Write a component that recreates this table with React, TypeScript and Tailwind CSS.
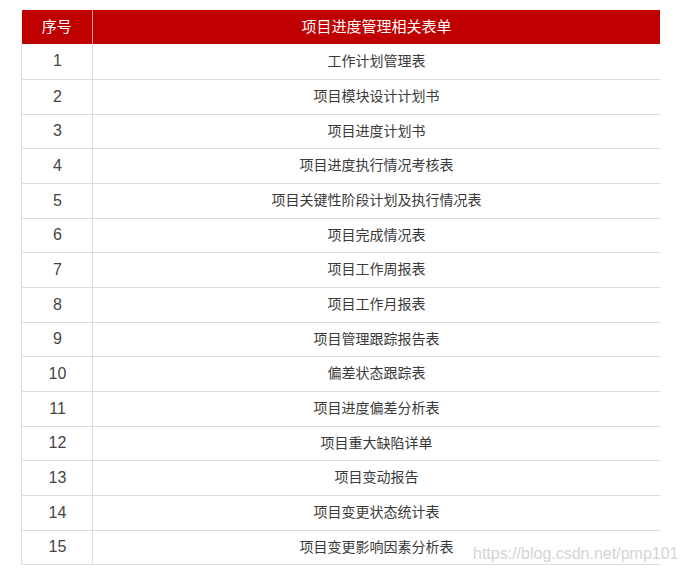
import React from 'react';

const rows: string[] = [
  '工作计划管理表',
  '项目模块设计计划书',
  '项目进度计划书',
  '项目进度执行情况考核表',
  '项目关键性阶段计划及执行情况表',
  '项目完成情况表',
  '项目工作周报表',
  '项目工作月报表',
  '项目管理跟踪报告表',
  '偏差状态跟踪表',
  '项目进度偏差分析表',
  '项目重大缺陷详单',
  '项目变动报告',
  '项目变更状态统计表',
  '项目变更影响因素分析表',
];

// row heights alternate so 15 rows fill 520px like the screenshot
const heightClass = ['h-[35px]', 'h-[35px]', 'h-[34px]'];

export default function App() {
  return (
    <div
      className="relative w-[683px] h-[573px] bg-white overflow-hidden"
      style={{ fontFamily: '"Liberation Sans", "Noto Sans CJK SC", sans-serif' }}
    >
      <div className="pt-[10px] pl-[21px]">
        <table className="w-[639px] border-collapse table-fixed">
          <thead>
            <tr className="h-[34px] bg-[#c00000] text-white text-[15px]">
              <th className="w-[71px] font-normal border-r border-[#e8a0a0]">序号</th>
              <th className="font-normal">项目进度管理相关表单</th>
            </tr>
          </thead>
          <tbody className="text-[#3a3a3a] text-[14px]">
            {rows.map((name, i) => (
              <tr key={i} className={`${heightClass[i % 3]} border-b border-[#dcdcdc]`}>
                <td className="text-center border-l border-r border-[#dcdcdc] text-[16px] text-[#444] pl-[1px]">
                  {i + 1}
                </td>
                <td className="text-center">{name}</td>
              </tr>
            ))}
          </tbody>
        </table>
      </div>
      <div className="absolute left-[473px] top-[542px] text-[16px] text-[#d4d4d4] whitespace-nowrap">
        https://blog.csdn.net/pmp101
      </div>
    </div>
  );
}
